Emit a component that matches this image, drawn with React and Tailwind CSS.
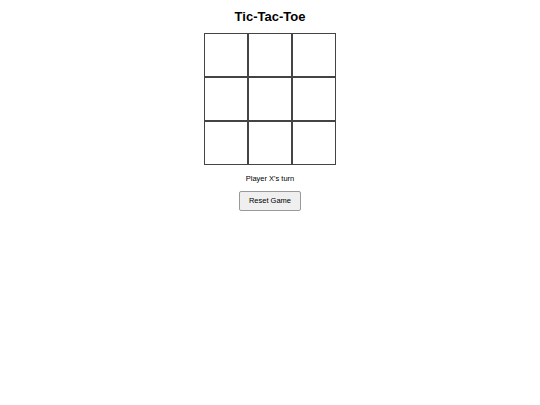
import React, { useState } from 'react'

export default function App() {
  const [board, setBoard] = useState(Array(9).fill(null))
  const [xNext, setXNext] = useState(true)

  const play = (i) => {
    if (board[i]) return
    const next = board.slice()
    next[i] = xNext ? 'X' : 'O'
    setBoard(next)
    setXNext(!xNext)
  }

  const reset = () => {
    setBoard(Array(9).fill(null))
    setXNext(true)
  }

  return (
    <div className="min-h-[405px] bg-white flex flex-col items-center text-black font-['Liberation_Sans',Arial,sans-serif]">
      <h1 className="mt-[9px] text-[13px] leading-[16px] font-bold">Tic-Tac-Toe</h1>
      <div className="mt-[8px] grid grid-cols-3 w-[132px]">
        {board.map((v, i) => (
          <button
            key={i}
            onClick={() => play(i)}
            className="w-[44px] h-[44px] border border-[#444] bg-white text-[20px] font-bold flex items-center justify-center"
          >
            {v}
          </button>
        ))}
      </div>
      <p className="mt-[9px] text-[7.5px] leading-[10px]">Player {xNext ? 'X' : 'O'}'s turn</p>
      <button
        onClick={reset}
        className="mt-[7px] h-[20px] px-[9px] text-[7.5px] bg-[#efefef] border border-[#999] rounded-[2px]"
      >
        Reset Game
      </button>
    </div>
  )
}
